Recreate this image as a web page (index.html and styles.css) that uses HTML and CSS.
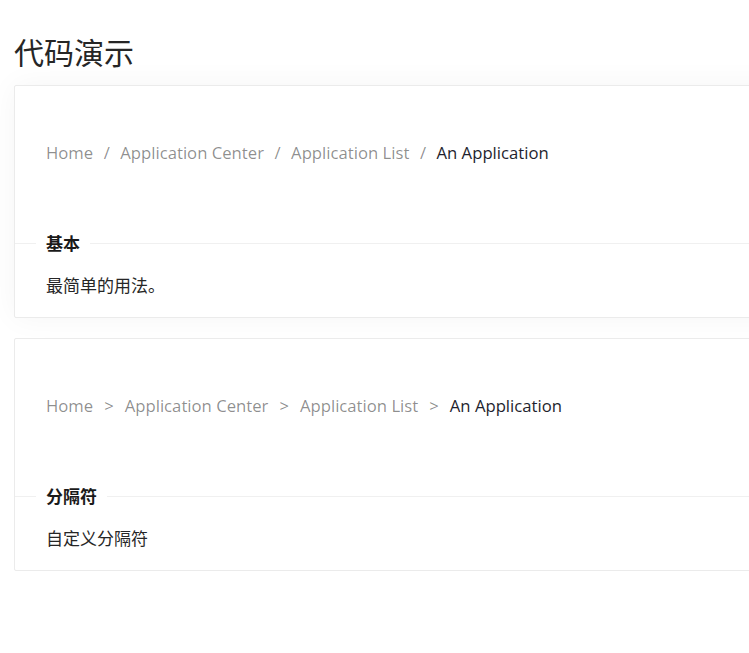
FILE: index.html
```html
<!DOCTYPE html>
<html lang="zh">
<head>
<meta charset="utf-8">
<title>代码演示</title>
<link rel="stylesheet" href="styles.css">
</head>
<body>
<div class="page">
  <h2 class="title">代码演示</h2>
  <section class="code-box code-box-active">
    <div class="demo">
      <nav class="breadcrumb">
        <span class="link">Home</span><span class="sep slash">/</span>
        <span class="link">Application Center</span><span class="sep slash">/</span>
        <span class="link">Application List</span><span class="sep slash">/</span>
        <span class="current">An Application</span>
      </nav>
    </div>
    <div class="meta">
      <div class="meta-title">基本</div>
      <p class="meta-desc">最简单的用法。</p>
    </div>
  </section>
  <section class="code-box">
    <div class="demo">
      <nav class="breadcrumb">
        <span class="link">Home</span><span class="sep gt">&gt;</span>
        <span class="link">Application Center</span><span class="sep gt">&gt;</span>
        <span class="link">Application List</span><span class="sep gt">&gt;</span>
        <span class="current">An Application</span>
      </nav>
    </div>
    <div class="meta">
      <div class="meta-title">分隔符</div>
      <p class="meta-desc">自定义分隔符</p>
    </div>
  </section>
</div>
</body>
</html>
```
FILE: styles.css
```css
html, body {
  margin: 0;
  padding: 0;
  background: #fff;
  overflow: hidden;
}
body {
  font-family: "Open Sans", "Noto Sans CJK SC", sans-serif;
  color: rgba(0, 0, 0, 0.85);
}
.page {
  padding: 32px 0 0 14px;
  width: 820px;
}
.title {
  margin: 0 0 15px 0;
  font-size: 30px;
  font-weight: 400;
  line-height: 38px;
  color: #262626;
  font-family: "Noto Sans CJK SC", sans-serif;
}
.code-box {
  border: 1px solid #ebebeb;
  border-radius: 2px;
  background: #fff;
  margin-bottom: 20px;
}
.code-box-active {
  box-shadow: 0 0 30px rgba(0, 0, 0, 0.045);
}
.demo {
  padding: 56px 31px 79px;
}
.breadcrumb {
  display: flex;
  align-items: center;
  font-size: 16.7px;
  line-height: 22px;
  white-space: nowrap;
}
.link {
  color: rgba(0, 0, 0, 0.45);
}
.current {
  color: #1f1f2e;
}
.sep {
  color: rgba(0, 0, 0, 0.45);
}
.slash {
  margin: 0 10.5px;
}
.gt {
  margin: 0 11px;
}
.meta {
  position: relative;
  border-top: 1px solid #f0f0f0;
  padding: 29px 31px 20px;
}
.meta-title {
  position: absolute;
  top: -12px;
  left: 21px;
  padding: 0 10px;
  background: #fff;
  font-family: "Noto Sans CJK SC", sans-serif;
  font-weight: 700;
  font-size: 17px;
  line-height: 22px;
  color: #1a1a1a;
}
.meta-desc {
  margin: 0;
  font-family: "Noto Sans CJK SC", sans-serif;
  font-size: 17px;
  line-height: 24px;
  color: #262626;
}
```
